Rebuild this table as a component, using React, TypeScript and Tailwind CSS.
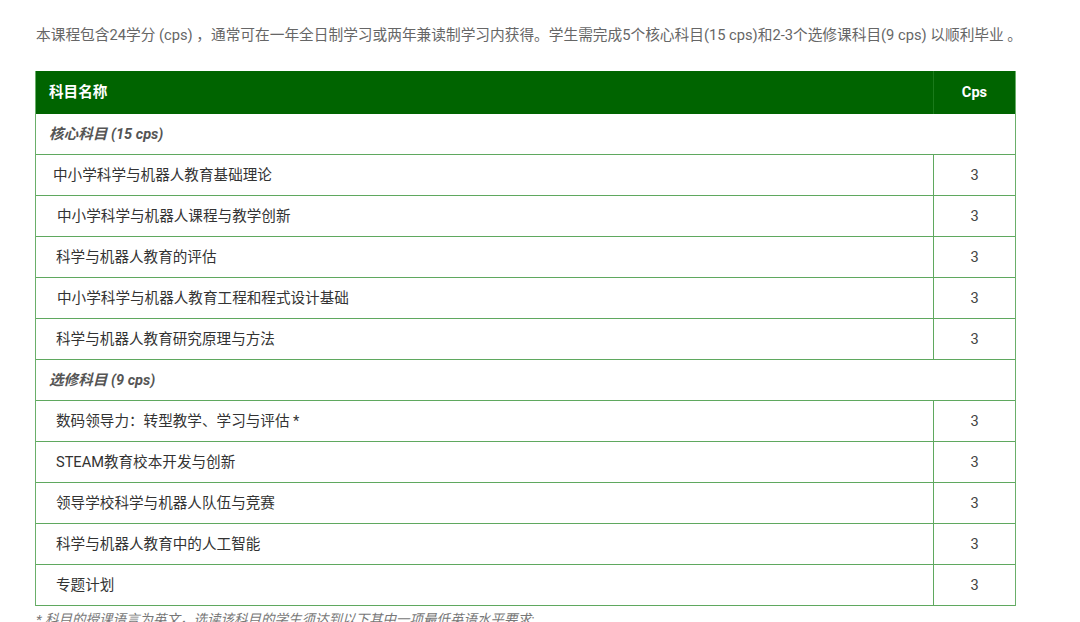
import React from "react";

const core = [
  { name: "中小学科学与机器人教育基础理论", pad: "pl-[17px]" },
  { name: "中小学科学与机器人课程与教学创新", pad: "pl-[21px]" },
  { name: "科学与机器人教育的评估", pad: "pl-[20px]" },
  { name: "中小学科学与机器人教育工程和程式设计基础", pad: "pl-[21px]" },
  { name: "科学与机器人教育研究原理与方法", pad: "pl-[20px]" },
];

const electives = [
  { name: "数码领导力：转型教学、学习与评估 *", pad: "pl-[20px]" },
  { name: "STEAM教育校本开发与创新", pad: "pl-[20px]" },
  { name: "领导学校科学与机器人队伍与竞赛", pad: "pl-[20px]" },
  { name: "科学与机器人教育中的人工智能", pad: "pl-[20px]" },
  { name: "专题计划", pad: "pl-[20px]" },
];

function Row({ name, pad }: { name: string; pad: string }) {
  return (
    <div className="flex h-[41px] border-b border-[#5fa85f]">
      <div className={`flex flex-1 items-center pt-[1px] ${pad} text-[14.6px] text-[#333]`}>{name}</div>
      <div className="flex w-[82px] items-center justify-center border-l border-[#5fa85f] pt-[2px] text-[14.6px] text-[#444]">
        3
      </div>
    </div>
  );
}

function Section({ title }: { title: string }) {
  return (
    <div className="flex h-[41px] items-center border-b border-[#5fa85f] pl-[13px] pt-[1px] text-[14.6px] font-bold italic text-[#555]">
      {title}
    </div>
  );
}

export default function App() {
  return (
    <div
      className="h-[622px] w-[1080px] overflow-hidden bg-white pl-[35px] pt-[25px]"
      style={{ fontFamily: "Roboto, 'Noto Sans CJK SC', sans-serif" }}
    >
      <p className="pl-[1px] text-[14.7px] leading-[20px] text-[#666]">
        本课程包含24学分 (cps) ，通常可在一年全日制学习或两年兼读制学习内获得。学生需完成5个核心科目(15 cps)和2-3个选修课科目(9 cps) 以顺利毕业 。
      </p>
      <div className="mt-[26px] w-[981px] border-x border-[#6aaf6a]">
        <div className="flex h-[43px] bg-[#006400] text-[14.6px] font-bold text-white">
          <div className="flex flex-1 items-center pl-[13px] pt-[1px]">科目名称</div>
          <div className="flex w-[82px] items-center justify-center border-l border-[#1a7a1a] pt-[1px]">Cps</div>
        </div>
        <Section title="核心科目 (15 cps)" />
        {core.map((r) => (
          <Row key={r.name} {...r} />
        ))}
        <Section title="选修科目 (9 cps)" />
        {electives.map((r) => (
          <Row key={r.name} {...r} />
        ))}
      </div>
      <p className="mt-[3px] pl-[1px] text-[13.5px] italic leading-[20px] text-[#777]">
        * 科目的授课语言为英文，选读该科目的学生须达到以下其中一项最低英语水平要求:
      </p>
    </div>
  );
}
